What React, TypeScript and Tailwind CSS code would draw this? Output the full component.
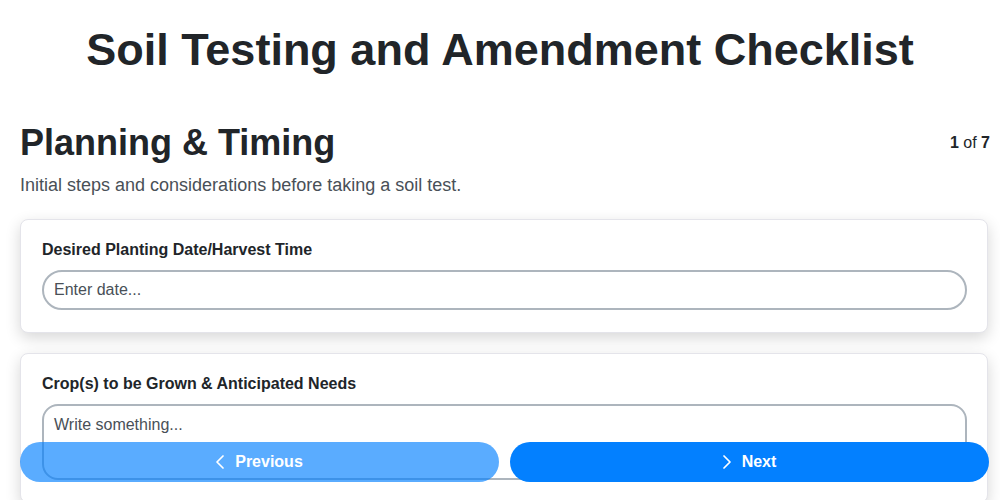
import React from 'react';
import { ChevronLeft, ChevronRight } from 'lucide-react';

const fields = [
  { label: 'Desired Planting Date/Harvest Time', type: 'input', placeholder: 'Enter date...' },
  { label: 'Crop(s) to be Grown & Anticipated Needs', type: 'textarea', placeholder: 'Write something...' },
];

const App = () => {
  return (
    <div className="min-h-screen bg-white pl-5 pr-[10px] pb-24 text-[#212529] [font-family:'Liberation_Sans',Arial,sans-serif]">
      <h1 className="-ml-[10px] pt-[23px] text-center text-[45px] font-bold leading-[54px]">
        Soil Testing and Amendment Checklist
      </h1>

      <div className="mt-[43px] flex items-center justify-between">
        <h2 className="text-[36px] font-bold leading-[46px]">Planning &amp; Timing</h2>
        <div className="text-[16px]">
          <span className="font-bold">1</span> of <span className="font-bold">7</span>
        </div>
      </div>
      <p className="mt-[6px] text-[18px] leading-[27px] text-[#495057]">
        Initial steps and considerations before taking a soil test.
      </p>

      <div className="mr-[2px] mt-5 flex flex-col gap-5">
        {fields.map((field, index) => (
          <div
            key={index}
            className="rounded-lg border border-[#e4e4ea] bg-white pb-[22px] pl-[21px] pr-5 pt-[18px] shadow-[0_5px_15px_rgba(0,0,0,0.16)]">
            <label className="mb-2 block text-[16px] font-bold leading-6">{field.label}</label>
            {field.type === 'input' ? (
              <input
                type="text"
                placeholder={field.placeholder}
                className="block h-10 w-full rounded-full border-2 border-[#adb5bd] px-[10px] text-[16px] outline-none placeholder:text-[#495057]"
              />
            ) : (
              <textarea
                placeholder={field.placeholder}
                className="block h-[76px] w-full resize-none rounded-2xl border-2 border-[#adb5bd] px-[10px] py-[7px] text-[16px] leading-6 outline-none placeholder:text-[#495057]"
              />
            )}
          </div>
        ))}
      </div>

      <div className="fixed bottom-[18px] left-5 right-[11px] flex gap-[11px]">
        <button
          type="button"
          disabled
          className="flex h-10 flex-1 items-center justify-center gap-[3px] rounded-full bg-[#0380ff] pr-2 text-[16px] font-bold text-white opacity-65">
          <ChevronLeft size={24} strokeWidth={1.75} />
          Previous
        </button>
        <button
          type="button"
          className="flex h-10 flex-1 items-center justify-center gap-[3px] rounded-full bg-[#0380ff] pr-2 text-[16px] font-bold text-white">
          <ChevronRight size={24} strokeWidth={1.75} />
          Next
        </button>
      </div>
    </div>
  );
};

export default App;
